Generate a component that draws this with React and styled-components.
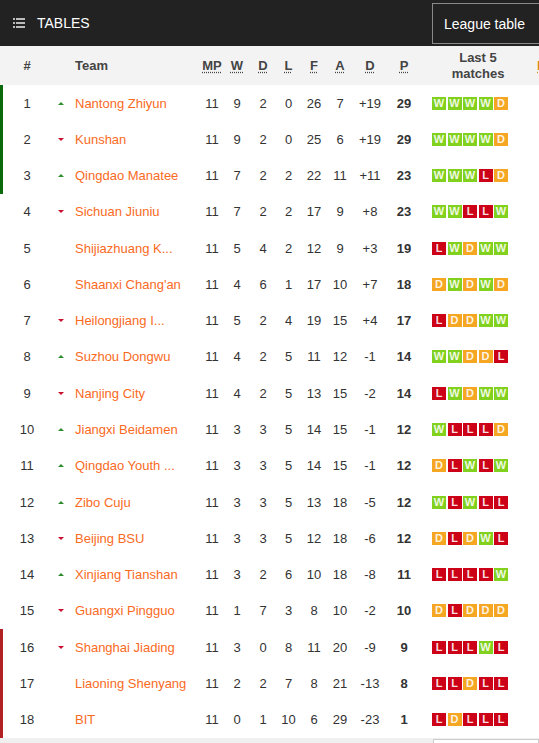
import React from 'react';
import styled, { createGlobalStyle } from 'styled-components';

const GlobalStyle = createGlobalStyle`
  body {
    margin: 0;
    background: #fff;
    font-family: "Liberation Sans", Arial, sans-serif;
  }
`;

const COLS = '54px 14px 132px 24px 26px 26px 25px 26px 26px 34px 34px 114px 40px';

const Page = styled.div`
  width: 539px;
  height: 743px;
  overflow: hidden;
  position: relative;
`;

const TopBar = styled.div`
  height: 46px;
  background: #222;
  display: flex;
  align-items: center;
  padding-left: 13px;
  box-sizing: border-box;
`;

const Title = styled.span`
  color: #fff;
  font-size: 14px;
  margin-left: 12px;
  flex: 1;
`;

const LeagueButton = styled.div`
  flex: none;
  height: 41px;
  width: 120px;
  margin-right: -13px;
  box-sizing: border-box;
  border: 1px solid #8a8a8a;
  color: #fff;
  font-size: 14px;
  display: flex;
  align-items: center;
  padding-left: 11px;
  align-self: flex-start;
  margin-top: 3px;
`;

const Grid = styled.div`
  display: grid;
  grid-template-columns: ${COLS};
  align-items: center;
`;

const HeadRow = styled(Grid)`
  height: 39px;
  background: #f3f3f3;
  color: #444;
  font-size: 13px;
  font-weight: bold;
`;

const Row = styled(Grid)`
  height: 36.28px;
  color: #333;
  font-size: 13px;
  box-shadow: ${p => (p.$zone ? `inset 3px 0 0 ${p.$zone}` : 'none')};
`;

const Cell = styled.div`
  text-align: ${p => p.$align || 'center'};
  white-space: nowrap;
  font-weight: ${p => (p.$bold ? 'bold' : 'inherit')};
  padding-left: ${p => p.$pad || 0}px;
`;

const Abbr = styled.span`
  text-decoration: underline dotted;
  text-underline-offset: 2px;
`;

const LastHead = styled.div`
  text-align: center;
  line-height: 16px;
  padding-top: 1px;
`;

const NextHead = styled.div`
  color: #e0861a;
  padding-left: 2px;
`;

const Team = styled.span`
  color: #fa6a1e;
  padding-left: 7px;
  white-space: nowrap;
`;

const Arrow = styled.span`
  display: block;
  width: 0;
  height: 0;
  margin: 0 auto;
  border-left: 3px solid transparent;
  border-right: 3px solid transparent;
  ${p =>
    p.$dir === 'up'
      ? 'border-bottom: 3px solid #2e8b2e;'
      : 'border-top: 3px solid #c8102e;'}
`;

const Form = styled.div`
  display: flex;
  gap: 1.5px;
  padding-left: 11px;
`;

const BADGE = { W: '#83d11f', D: '#f5a623', L: '#cc0016' };

const Badge = styled.span`
  width: 14px;
  height: 13px;
  background: ${p => BADGE[p.$r]};
  color: rgba(255, 255, 255, 0.88);
  font-size: 11px;
  font-weight: bold;
  line-height: 13px;
  text-align: center;
`;

const Footer = styled.div`
  height: 6px;
  background: #f0f0f0;
  display: flex;
  justify-content: flex-end;
  padding-top: 1px;
`;

const FooterBox = styled.div`
  width: 104px;
  background: #fff;
  border: 1px solid #ccc;
  border-bottom: none;
`;

const MenuIcon = () => (
  <svg width="12" height="10" viewBox="0 0 12 10" fill="#bbb">
    <rect x="0" y="0" width="2" height="2" />
    <rect x="3" y="0" width="9" height="2" />
    <rect x="0" y="4" width="2" height="2" />
    <rect x="3" y="4" width="9" height="2" />
    <rect x="0" y="8" width="2" height="2" />
    <rect x="3" y="8" width="9" height="2" />
  </svg>
);

const rows = [
  [1, 'up', 'Nantong Zhiyun', 11, 9, 2, 0, 26, 7, '+19', 29, 'WWWWD'],
  [2, 'down', 'Kunshan', 11, 9, 2, 0, 25, 6, '+19', 29, 'WWWWD'],
  [3, 'up', 'Qingdao Manatee', 11, 7, 2, 2, 22, 11, '+11', 23, 'WWWLD'],
  [4, 'down', 'Sichuan Jiuniu', 11, 7, 2, 2, 17, 9, '+8', 23, 'WWLLW'],
  [5, null, 'Shijiazhuang K...', 11, 5, 4, 2, 12, 9, '+3', 19, 'LWDWW'],
  [6, null, "Shaanxi Chang'an", 11, 4, 6, 1, 17, 10, '+7', 18, 'DWDWD'],
  [7, 'down', 'Heilongjiang I...', 11, 5, 2, 4, 19, 15, '+4', 17, 'LDDWW'],
  [8, 'up', 'Suzhou Dongwu', 11, 4, 2, 5, 11, 12, '-1', 14, 'WWDDL'],
  [9, 'down', 'Nanjing City', 11, 4, 2, 5, 13, 15, '-2', 14, 'LWDWW'],
  [10, 'up', 'Jiangxi Beidamen', 11, 3, 3, 5, 14, 15, '-1', 12, 'WLLLD'],
  [11, 'up', 'Qingdao Youth ...', 11, 3, 3, 5, 14, 15, '-1', 12, 'DLWLW'],
  [12, 'up', 'Zibo Cuju', 11, 3, 3, 5, 13, 18, '-5', 12, 'WLWLL'],
  [13, 'down', 'Beijing BSU', 11, 3, 3, 5, 12, 18, '-6', 12, 'DLDWL'],
  [14, 'up', 'Xinjiang Tianshan', 11, 3, 2, 6, 10, 18, '-8', 11, 'LLLLW'],
  [15, 'down', 'Guangxi Pingguo', 11, 1, 7, 3, 8, 10, '-2', 10, 'DLDDD'],
  [16, 'down', 'Shanghai Jiading', 11, 3, 0, 8, 11, 20, '-9', 9, 'LLLWL'],
  [17, null, 'Liaoning Shenyang', 11, 2, 2, 7, 8, 21, '-13', 8, 'LLDLL'],
  [18, null, 'BIT', 11, 0, 1, 10, 6, 29, '-23', 1, 'LDLLL'],
];

const zoneFor = pos => (pos <= 3 ? '#0b6b0b' : pos >= 16 ? '#b22222' : null);

export default function App() {
  return (
    <Page>
      <GlobalStyle />
      <TopBar>
        <MenuIcon />
        <Title>TABLES</Title>
        <LeagueButton>League table</LeagueButton>
      </TopBar>
      <HeadRow>
        <Cell>#</Cell>
        <Cell />
        <Cell $align="left" $pad={7}>Team</Cell>
        {['MP', 'W', 'D', 'L', 'F', 'A', 'D', 'P'].map((h, i) => (
          <Cell key={i}><Abbr>{h}</Abbr></Cell>
        ))}
        <LastHead>Last 5<br />matches</LastHead>
        <NextHead><Abbr>N</Abbr></NextHead>
      </HeadRow>
      {rows.map(([pos, dir, team, mp, w, d, l, f, a, diff, pts, form]) => (
        <Row key={pos} $zone={zoneFor(pos)}>
          <Cell>{pos}</Cell>
          <Cell>{dir && <Arrow $dir={dir} />}</Cell>
          <Cell $align="left"><Team>{team}</Team></Cell>
          <Cell>{mp}</Cell>
          <Cell>{w}</Cell>
          <Cell>{d}</Cell>
          <Cell>{l}</Cell>
          <Cell>{f}</Cell>
          <Cell>{a}</Cell>
          <Cell>{diff}</Cell>
          <Cell $bold>{pts}</Cell>
          <Form>
            {form.split('').map((r, i) => (
              <Badge key={i} $r={r}>{r}</Badge>
            ))}
          </Form>
          <Cell />
        </Row>
      ))}
      <Footer>
        <FooterBox />
      </Footer>
    </Page>
  );
}
